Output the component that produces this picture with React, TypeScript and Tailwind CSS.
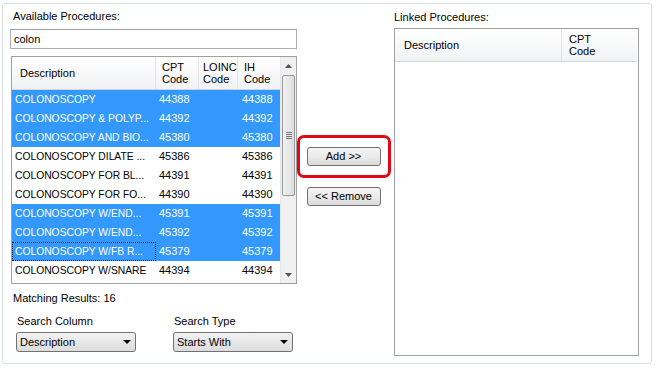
import React from "react";

type Row = { d: string; c: string; ih: string; s?: boolean; f?: boolean };

const rows: Row[] = [
  { d: "COLONOSCOPY", c: "44388", ih: "44388", s: true },
  { d: "COLONOSCOPY & POLYP...", c: "44392", ih: "44392", s: true },
  { d: "COLONOSCOPY AND BIO...", c: "45380", ih: "45380", s: true },
  { d: "COLONOSCOPY DILATE ...", c: "45386", ih: "45386" },
  { d: "COLONOSCOPY FOR BL...", c: "44391", ih: "44391" },
  { d: "COLONOSCOPY FOR FO...", c: "44390", ih: "44390" },
  { d: "COLONOSCOPY W/END...", c: "45391", ih: "45391", s: true },
  { d: "COLONOSCOPY W/END...", c: "45392", ih: "45392", s: true },
  { d: "COLONOSCOPY W/FB R...", c: "45379", ih: "45379", s: true, f: true },
  { d: "COLONOSCOPY W/SNARE", c: "44394", ih: "44394" },
];

function Arrow({ up }: { up?: boolean }) {
  return (
    <svg width="7" height="4" viewBox="0 0 7 4">
      {up ? <path d="M0 4 L3.5 0 L7 4 Z" fill="#555" /> : <path d="M0 0 L3.5 4 L7 0 Z" fill="#555" />}
    </svg>
  );
}

function Dropdown({ label, value }: { label: string; value: string }) {
  return (
    <div className="flex flex-col">
      <div className="h-[13px] leading-[13px] pl-[1px] mb-[4px]">{label}</div>
      <div className="w-[120px] h-[20px] border border-[#707070] rounded-[3px] bg-gradient-to-b from-[#f2f2f2] to-[#dcdcdc] flex items-center justify-between pl-[3px] pr-[4px]">
        <span>{value}</span>
        <svg width="8" height="4" viewBox="0 0 8 4">
          <path d="M0 0 L4 4 L8 0 Z" fill="#000" />
        </svg>
      </div>
    </div>
  );
}

function Btn({ children }: { children: React.ReactNode }) {
  return (
    <div className="w-[74px] h-[19px] border border-[#707070] rounded-[3px] bg-gradient-to-b from-[#f4f4f4] via-[#ebebeb] to-[#d9d9d9] flex items-center justify-center leading-none">
      {children}
    </div>
  );
}

export default function App() {
  return (
    <div
      className="w-[656px] h-[368px] bg-white text-black text-[11px] pt-[3px] pl-[2px]"
      style={{ fontFamily: '"Liberation Sans", Arial, sans-serif' }}
    >
      <div className="w-[650px] h-[361px] border border-[#dadfe2] rounded-[3px] flex">
        {/* Left column */}
        <div className="w-[287px] ml-[7px] flex flex-col">
          <div className="h-[13px] leading-[13px] mt-[6px] pl-[3px]">Available Procedures:</div>
          <div className="mt-[6px] h-[20px] w-[287px] border border-[#abadb3] border-t-[#9a9da6] flex items-center pl-[3px]">
            colon
          </div>
          <div className="mt-[7px] ml-[1px] w-[286px] h-[228px] border border-[#a0a0a0] flex">
            <div className="w-[268px] flex flex-col">
              <div className="h-[33px] flex bg-gradient-to-b from-white to-[#f1f2f4] border-b border-[#d5d5d5] leading-[12px]">
                <div className="w-[144px] border-r border-[#e3e3e3] flex items-center pl-[8px]">Description</div>
                <div className="w-[43px] border-r border-[#e3e3e3] flex flex-col justify-center pl-[6px]">
                  <span>CPT</span>
                  <span>Code</span>
                </div>
                <div className="w-[39px] border-r border-[#e3e3e3] flex flex-col justify-center pl-[4px]">
                  <span>LOINC</span>
                  <span>Code</span>
                </div>
                <div className="w-[42px] flex flex-col justify-center pl-[6px]">
                  <span>IH</span>
                  <span>Code</span>
                </div>
              </div>
              {rows.map((r, i) => (
                <div
                  key={i}
                  className={`h-[19px] flex items-center ${r.s ? "bg-[#3399ff] text-white" : "bg-white text-black"}`}
                >
                  <div
                    className={`w-[144px] h-[19px] flex items-center pl-[2px] whitespace-nowrap overflow-hidden text-[10.3px] ${
                      r.f ? "border border-dotted border-[#1a1a1a]" : "border border-transparent"
                    }`}
                  >
                    {r.d}
                  </div>
                  <div className="w-[43px] pl-[3px]">{r.c}</div>
                  <div className="w-[39px]"></div>
                  <div className="w-[42px] pl-[4px]">{r.ih}</div>
                </div>
              ))}
            </div>
            {/* Scrollbar */}
            <div className="w-[16px] bg-[#f0f0f0] border-l border-[#e8e8e8] flex flex-col items-center">
              <div className="h-[17px] flex items-center justify-center">
                <Arrow up />
              </div>
              <div className="w-[13px] h-[121px] mt-[1px] border border-[#979797] rounded-[2px] bg-gradient-to-r from-[#f3f3f3] to-[#dcdcdc] flex items-center justify-center">
                <div className="flex flex-col gap-[1px]">
                  <div className="w-[6px] h-[1px] bg-[#777]" />
                  <div className="w-[6px] h-[1px] bg-[#777]" />
                  <div className="w-[6px] h-[1px] bg-[#777]" />
                  <div className="w-[6px] h-[1px] bg-[#777]" />
                </div>
              </div>
              <div className="flex-1" />
              <div className="h-[17px] flex items-center justify-center">
                <Arrow />
              </div>
            </div>
          </div>
          <div className="mt-[8px] pl-[3px] h-[13px] leading-[13px]">Matching Results: 16</div>
          <div className="mt-[10px] ml-[6px] flex gap-[37px]">
            <Dropdown label="Search Column" value="Description" />
            <Dropdown label="Search Type" value="Starts With" />
          </div>
        </div>

        {/* Middle column */}
        <div className="w-[93px] flex flex-col items-center">
          <div className="mt-[131px] w-[94px] h-[43px] border-[3px] border-[#e30613] rounded-[7px] flex items-center justify-center">
            <Btn>Add &gt;&gt;</Btn>
          </div>
          <div className="mt-[9px]">
            <Btn>&lt;&lt; Remove</Btn>
          </div>
        </div>

        {/* Right column */}
        <div className="ml-[4px] w-[245px] flex flex-col">
          <div className="h-[13px] leading-[13px] mt-[7px]">Linked Procedures:</div>
          <div className="mt-[4px] w-[245px] h-[328px] border border-[#a0a0a0] bg-white">
            <div className="h-[33px] w-[242px] flex bg-gradient-to-b from-white to-[#f1f2f4] border-b border-[#d5d5d5] leading-[12px]">
              <div className="w-[167px] border-r border-[#e3e3e3] flex items-center pl-[9px]">Description</div>
              <div className="flex-1 flex flex-col justify-center pl-[7px]">
                <span>CPT</span>
                <span>Code</span>
              </div>
            </div>
          </div>
        </div>
      </div>
    </div>
  );
}
